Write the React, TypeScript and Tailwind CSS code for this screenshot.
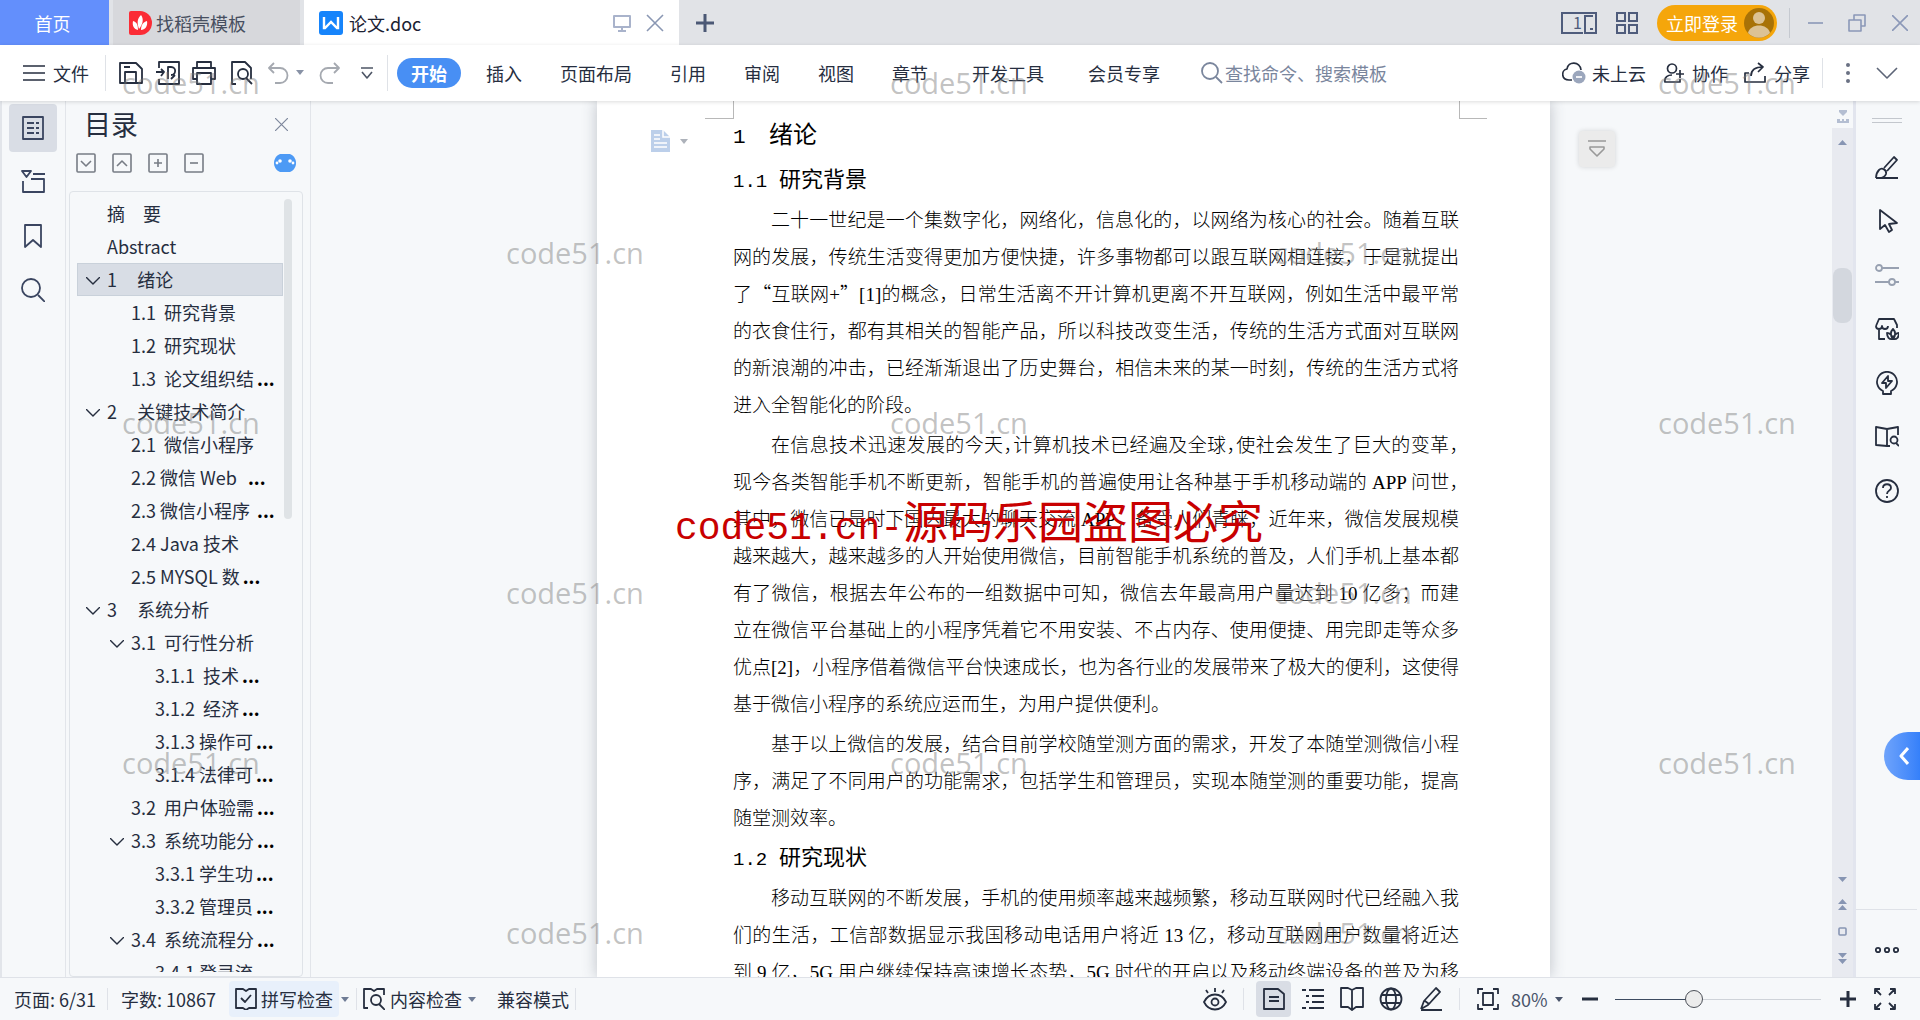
import React, { useState } from 'react';
import clsx from 'clsx';

interface IconProps {
  size?: number;
  width?: number;
  stroke?: number;
  className?: string;
  children: React.ReactNode;
}

function Icon({ size = 24, width, stroke = 2, className, children }: IconProps) {
  return (
    <svg
      width={width ?? size}
      height={size}
      viewBox={`0 0 ${width ?? size} ${size}`}
      fill="none"
      stroke="currentColor"
      strokeWidth={stroke}
      strokeLinejoin="round"
      className={clsx('shrink-0', className)}
      aria-hidden="true"
    >
      {children}
    </svg>
  );
}

function Caret({ className }: { className?: string }) {
  return (
    <Icon size={5} width={8} className={className}>
      <path d="M0 0h8L4 5z" fill="currentColor" stroke="none" />
    </Icon>
  );
}

interface TocItem {
  text: string;
  level: number;
  open?: boolean;
  cut?: boolean;
}

const toc: TocItem[] = [
  { text: '摘　要', level: 1 },
  { text: 'Abstract', level: 1 },
  { text: '1     绪论', level: 1, open: true },
  { text: '1.1  研究背景', level: 2 },
  { text: '1.2  研究现状', level: 2 },
  { text: '1.3  论文组织结', level: 2, cut: true },
  { text: '2     关键技术简介', level: 1, open: true },
  { text: '2.1  微信小程序', level: 2 },
  { text: '2.2 微信 Web  ', level: 2, cut: true },
  { text: '2.3 微信小程序 ', level: 2, cut: true },
  { text: '2.4 Java 技术', level: 2 },
  { text: '2.5 MYSQL 数', level: 2, cut: true },
  { text: '3     系统分析', level: 1, open: true },
  { text: '3.1  可行性分析', level: 2, open: true },
  { text: '3.1.1  技术', level: 3, cut: true },
  { text: '3.1.2  经济', level: 3, cut: true },
  { text: '3.1.3 操作可', level: 3, cut: true },
  { text: '3.1.4 法律可', level: 3, cut: true },
  { text: '3.2  用户体验需', level: 2, cut: true },
  { text: '3.3  系统功能分', level: 2, open: true, cut: true },
  { text: '3.3.1 学生功', level: 3, cut: true },
  { text: '3.3.2 管理员', level: 3, cut: true },
  { text: '3.4  系统流程分', level: 2, open: true, cut: true },
  { text: '3.4.1 登录流', level: 3 },
];

const indents: Record<number, string> = { 1: 'pl-2', 2: 'pl-8', 3: 'pl-14' };

const background: string[][] = [
  [
    '二十一世纪是一个集数字化，网络化，信息化的，以网络为核心的社会。随着互联',
    '网的发展，传统生活变得更加方便快捷，许多事物都可以跟互联网相连接，于是就提出',
    '了“互联网+”[1]的概念，日常生活离不开计算机更离不开互联网，例如生活中最平常',
    '的衣食住行，都有其相关的智能产品，所以科技改变生活，传统的生活方式面对互联网',
    '的新浪潮的冲击，已经渐渐退出了历史舞台，相信未来的某一时刻，传统的生活方式将',
    '进入全智能化的阶段。',
  ],
  [
    '在信息技术迅速发展的今天，计算机技术已经遍及全球，使社会发生了巨大的变革，',
    '现今各类智能手机不断更新，智能手机的普遍使用让各种基于手机移动端的 APP 问世，',
    '其中，微信已是时下国内最大的聊天交流 APP，备受人们青睐，近年来，微信发展规模',
    '越来越大，越来越多的人开始使用微信，目前智能手机系统的普及，人们手机上基本都',
    '有了微信，根据去年公布的一组数据中可知，微信去年最高用户量达到 10 亿多；而建',
    '立在微信平台基础上的小程序凭着它不用安装、不占内存、使用便捷、用完即走等众多',
    '优点[2]，小程序借着微信平台快速成长，也为各行业的发展带来了极大的便利，这使得',
    '基于微信小程序的系统应运而生，为用户提供便利。',
  ],
  [
    '基于以上微信的发展，结合目前学校随堂测方面的需求，开发了本随堂测微信小程',
    '序，满足了不同用户的功能需求，包括学生和管理员，实现本随堂测的重要功能，提高',
    '随堂测效率。',
  ],
];

const status: string[][] = [
  [
    '移动互联网的不断发展，手机的使用频率越来越频繁，移动互联网时代已经融入我',
    '们的生活，工信部数据显示我国移动电话用户将近 13 亿，移动互联网用户数量将近达',
    '到 9 亿，5G 用户继续保持高速增长态势，5G 时代的开启以及移动终端设备的普及为移',
  ],
];

// curly quotes come from the CJK face to stay full width, a closing comma is set half width
function renderLine(line: string) {
  return line.split(/([“”]|，$)/).map((part, i) => {
    if (/^[“”]$/.test(part)) {
      return <span key={i} className="font-['Noto_Sans_CJK_SC',sans-serif] leading-none">{part}</span>;
    }
    if (part === '，') {
      return <span key={i} className="[font-feature-settings:'halt']">{part}</span>;
    }
    return part;
  });
}

function Paragraph({ lines }: { lines: string[] }) {
  return (
    <p className="mb-[3px] last:mb-0">
      {lines.map((line, i) => (
        <span
          key={i}
          className={clsx(
            'block whitespace-nowrap',
            i === 0 && 'pl-[38px]',
            !line.endsWith('。') && '[text-align-last:justify]',
            i === 0 && line.endsWith('，') && "[font-feature-settings:'halt']"
          )}
        >
          {renderLine(line)}
        </span>
      ))}
    </p>
  );
}

function SectionHeading({ num, title }: { num: string; title: string }) {
  return (
    <h2 className="flex h-[43px] items-baseline text-[22px] leading-[37px]">
      <span className="w-[46px] font-['Liberation_Mono',monospace] text-[19px]">{num}</span>
      {title}
    </h2>
  );
}

function TitleBar() {
  return (
    <header className="flex h-[45px] shrink-0 bg-[#e1e3e7] text-lg">
      <button className="w-[109px] bg-[#638ffc] pr-1 pt-px text-white">首页</button>
      <button className="ml-1 flex w-[187px] items-center bg-[#d7d8dc] pl-4 text-[#474f60]">
        <svg width="23" height="24" viewBox="0 0 23 24" aria-hidden="true">
          <path d="M2 0h9a12 12 0 0 1 0 24H2a2 2 0 0 1-2-2V2a2 2 0 0 1 2-2z" fill="#fb2c36" />
          <path d="M12 4c3 4 2 9-2 14C8 12 8 8 12 4zM4 10c4 1 5 4 5 9-4-1-6-4-5-9zM18 10c1 5-2 9-6 9 0-5 2-8 6-9z" fill="#fff" />
        </svg>
        <span className="ml-1">找稻壳模板</span>
      </button>
      <div className="ml-1 flex w-[375px] items-center bg-white pl-[15px] pr-[15px] text-[#1b2233]">
        <svg width="24" height="24" viewBox="0 0 24 24" aria-hidden="true">
          <rect width="24" height="24" rx="3" fill="#1684fb" />
          <path d="M5 6v11h1l6-6 6 6h1V6" fill="none" stroke="#fff" strokeWidth="2.4" />
        </svg>
        <span className="ml-1.5">论文.doc</span>
        <button className="ml-auto text-[#a9b3cb]" aria-label="演示">
          <Icon size={18}><path d="M1 2h16v11H1zM9 13v4M5 17h8" /></Icon>
        </button>
        <button className="ml-[15px] text-[#8a97b3]" aria-label="关闭标签">
          <Icon size={18} stroke={1.6}><path d="M1 1l16 16M17 1L1 17" /></Icon>
        </button>
      </div>
      <button className="ml-[17px] text-[#4b5875]" aria-label="新建">
        <Icon size={18} stroke={3}><path d="M9 0v18M0 9h18" /></Icon>
      </button>

      <div className="ml-auto flex items-center pr-[12px] text-[#4f5c7c]">
        <button className="flex" aria-label="窗口">
          <svg width="36" height="22" viewBox="0 0 36 22" fill="none" stroke="currentColor" strokeWidth="2" aria-hidden="true">
            <path d="M22 21H1V1h34v20H24V4h8M29 17h3" />
            <text x="12" y="17" fontSize="16" stroke="none" fill="currentColor" fontFamily="Noto Sans CJK SC">1</text>
          </svg>
        </button>
        <button className="ml-[19px]" aria-label="应用">
          <Icon size={22}><path d="M1 1h8v8H1zM13 1h8v8h-8zM1 13h8v8H1zM13 13h8v8h-8z" strokeLinejoin="miter" /></Icon>
        </button>
        <button className="ml-[19px] flex h-9 items-center rounded-full bg-[#f5a60b] pl-[9px] pr-[3px] text-white">
          立即登录
          <svg className="ml-1.5" width="30" height="30" viewBox="0 0 30 30" aria-hidden="true">
            <circle cx="15" cy="15" r="15" fill="#a87207" />
            <circle cx="15" cy="10" r="6" fill="#dcc294" />
            <path d="M4 25c2-10 20-10 22 0a15 15 0 0 1-22 0z" fill="#dcc294" />
          </svg>
        </button>
        <span className="ml-3 h-[30px] w-px bg-[#c5c9d0]" />
        <div className="flex items-center text-[#8b98b8]">
          <button className="ml-[18px]" aria-label="最小化">
            <Icon size={16} stroke={1.6}><path d="M0 8h15" /></Icon>
          </button>
          <button className="ml-6" aria-label="还原">
            <Icon size={18} stroke={1.6}><path d="M1 6h12v11H1zM6 6V1h11v11h-4" /></Icon>
          </button>
          <button className="ml-[26px]" aria-label="关闭">
            <Icon size={16} stroke={1.6}><path d="M0 0l16 16M16 0L0 16" /></Icon>
          </button>
        </div>
      </div>
    </header>
  );
}

function Ribbon() {
  return (
    <nav className="relative z-10 flex h-14 shrink-0 items-center bg-white pb-px text-lg shadow-[0_1px_4px_rgba(0,0,0,0.14)]">
      <button className="ml-[23px] flex items-center gap-2">
        <Icon size={16} width={22} stroke={1.6}><path d="M0 1h22M0 8h22M0 15h22" /></Icon>
        文件
      </button>
      <span className="ml-4 h-9 w-px bg-[#dfe2e7]" />
      <div className="ml-[13px] flex items-center">
        <button aria-label="保存">
          <Icon size={24} stroke={1.8}><path d="M1 2h16l6 6v14H1zM6 22V11h11v11M5 6h6" /></Icon>
        </button>
        <button className="ml-[13px]" aria-label="输出为PDF">
          <Icon size={24} stroke={1.8}><path d="M3 7V1h20v22H3v-5M0 11h8M5 8l3 3-3 4M12 18V6h3c6 0 5 8 0 8M15 18l4-4" /></Icon>
        </button>
        <button className="ml-3" aria-label="打印">
          <Icon size={24} stroke={1.8}><path d="M5 7V1h14v6M5 18H1V7h22v11h-4M5 12h14v11H5z" /></Icon>
        </button>
        <button className="ml-[14px]" aria-label="打印预览">
          <Icon size={24} stroke={1.8}><path d="M6 23H2V1h13l6 6v8M21 15v3" /><circle cx="13" cy="13" r="5" /><path d="M16 17l6 6" /></Icon>
        </button>
        <button className="ml-[14px] text-[#a5a9b0]" aria-label="撤销">
          <Icon size={22} stroke={1.8}><path d="M6 1L1 6l5 5M1 6h11a7 7 0 0 1 0 15H7" /></Icon>
        </button>
        <button className="ml-1.5 text-[#8892a6]" aria-label="撤销列表"><Caret /></button>
        <button className="ml-[15px] text-[#a5a9b0]" aria-label="恢复">
          <Icon size={22} stroke={1.8}><path d="M15 1l5 5-5 5M20 6H9a7 7 0 0 0 0 15h5" /></Icon>
        </button>
        <button className="ml-5 text-[#4d5565]" aria-label="更多">
          <Icon size={12} stroke={1.6}><path d="M0 1h12M1 5l5 6 5-6" /></Icon>
        </button>
      </div>
      <span className="ml-[14px] h-9 w-px bg-[#dfe2e7]" />
      <button className="ml-[9px] h-[30px] rounded-full bg-[#488ff4] px-[14px] font-bold leading-[30px] text-white">开始</button>
      <div className="ml-[25px] flex gap-[38px] whitespace-nowrap">
        <button>插入</button>
        <button>页面布局</button>
        <button>引用</button>
        <button>审阅</button>
        <button>视图</button>
        <button>章节</button>
        <button className="mx-1.5">开发工具</button>
        <button>会员专享</button>
      </div>
      <label className="ml-[41px] flex items-center text-[#7a869d]">
        <Icon size={22} stroke={1.8}><circle cx="9" cy="9" r="8" /><path d="M15 15l6 6" /></Icon>
        <input
          className="ml-0.5 w-[170px] bg-transparent outline-none placeholder:text-[#7a869d] placeholder:opacity-100"
          placeholder="查找命令、搜索模板"
          aria-label="查找命令、搜索模板"
        />
      </label>

      <div className="ml-auto flex items-center whitespace-nowrap pr-[22px]">
        <button className="flex items-center gap-1.5">
          <Icon size={22} width={24} stroke={1.7}>
            <path d="M10 18H7C-1 18-1 8 5 7c1-8 13-8 14 1" />
            <circle cx="17" cy="15" r="6.5" fill="#9ba6bc" stroke="none" />
            <path d="M14 15h6" stroke="#fff" />
          </Icon>
          未上云
        </button>
        <button className="ml-[18px] flex items-center gap-2">
          <Icon size={20} stroke={1.7}><circle cx="8" cy="5.5" r="4.5" /><path d="M10 19H1c-1-5 3-7 7-7M16 7v8M12 11h8M10 19h6v-3" /></Icon>
          协作
        </button>
        <button className="ml-4 flex items-center gap-2">
          <Icon size={22} stroke={1.7}><path d="M5 11H1v9h20v-6M7 14c0-6 4-9 12-9M14 1l5 4-5 5" /></Icon>
          分享
        </button>
        <span className="ml-3 h-[30px] w-px bg-[#dfe2e7]" />
        <button className="ml-[23px] text-[#6a7183]" aria-label="更多选项">
          <Icon size={20} width={4}>
            <g fill="currentColor" stroke="none"><circle cx="2" cy="2" r="2" /><circle cx="2" cy="10" r="2" /><circle cx="2" cy="18" r="2" /></g>
          </Icon>
        </button>
        <button className="ml-[26px] text-[#5d6577]" aria-label="折叠功能区">
          <Icon size={12} width={22} stroke={1.6}><path d="M1 1l10 10L21 1" /></Icon>
        </button>
      </div>
    </nav>
  );
}

function SideTabs() {
  return (
    <aside className="flex w-[66px] shrink-0 flex-col gap-1.5 border-l-2 border-r border-[#e2e5ea] pl-[7px] pt-[3px] text-[#3a4560]">
      <button className="grid size-12 place-items-center rounded bg-[#d9dde5]" aria-label="目录">
        <Icon size={24} width={22} stroke={1.8}><path d="M1 1h20v22H1zM5 7h7M5 12h7M5 17h7M14 7h3M14 12h3M14 17h3" /></Icon>
      </button>
      <button className="grid size-12 place-items-center" aria-label="章节导航">
        <Icon size={24} stroke={1.8}><path d="M1 1h9L5.500 7zM12 4h12M10 9h13v13H2V11" /></Icon>
      </button>
      <button className="grid size-12 place-items-center" aria-label="书签">
        <Icon size={24} width={18} stroke={1.8}><path d="M1 1h16v22l-8-7-8 7z" /></Icon>
      </button>
      <button className="grid size-12 place-items-center" aria-label="查找">
        <Icon size={24} stroke={1.8}><circle cx="10" cy="10" r="9" /><path d="M17 17l7 7" /></Icon>
      </button>
    </aside>
  );
}

function TocPanel() {
  const [selected, setSelected] = useState(2);

  return (
    <section className="flex w-[245px] shrink-0 flex-col border-r border-[#e2e5ea] pl-[3px] pr-[7px]">
      <div className="flex h-[47px] items-center justify-between pl-[15px] pr-[15px]">
        <h2 className="pb-0.5 text-[27px] leading-[45px]">目录</h2>
        <button className="text-[#7d879c]" aria-label="关闭目录">
          <Icon size={13} stroke={1.2}><path d="M0 0l13 13M13 0L0 13" /></Icon>
        </button>
      </div>
      <div className="flex h-[30px] items-center gap-4 pl-[7px] pr-[7px] text-[#777c85]">
        <button aria-label="展开"><Icon size={20} stroke={1.6}><rect x="1" y="1" width="18" height="18" rx="1" /><path d="M5 8l5 5 5-5" /></Icon></button>
        <button aria-label="收起"><Icon size={20} stroke={1.6}><rect x="1" y="1" width="18" height="18" rx="1" /><path d="M5 13l5-5 5 5" /></Icon></button>
        <button aria-label="增加级别"><Icon size={20} stroke={1.6}><rect x="1" y="1" width="18" height="18" rx="1" /><path d="M6 10h8M10 6v8" /></Icon></button>
        <button aria-label="减少级别"><Icon size={20} stroke={1.6}><rect x="1" y="1" width="18" height="18" rx="1" /><path d="M6 10h8" /></Icon></button>
        <button className="ml-auto" aria-label="智能识别目录">
          <svg width="22" height="18" viewBox="0 0 22 18" aria-hidden="true">
            <path d="M6 0h10c8 3 8 15 0 18H6C-2 15-2 3 6 0z" fill="#4d9af5" />
            <g fill="#fff"><circle cx="6" cy="7" r="1.8" /><circle cx="3" cy="9" r="1.4" /><circle cx="16" cy="7" r="1.8" /><circle cx="19" cy="9" r="1.4" /></g>
          </svg>
        </button>
      </div>
      <div className="mt-[13px] flex min-h-0 flex-1 rounded border border-[#dfe3e8] pb-1 pl-[7px] pt-[5px]">
        <ul className="h-full w-[206px] overflow-hidden text-lg">
          {toc.map((item, i) => (
            <li key={item.text}>
              <button
                onClick={() => setSelected(i)}
                className={clsx(
                  'flex h-[33px] w-full items-center whitespace-pre border pb-0.5 text-left',
                  indents[item.level],
                  selected === i ? 'border-[#c9d1da] bg-[#d8dde5]' : 'border-transparent'
                )}
              >
                <span className="w-[21px] shrink-0 pt-1">
                  {item.open && <Icon size={8} width={14} stroke={1.4}><path d="M0 0l7 7 7-7" /></Icon>}
                </span>
                {item.text}
                {item.cut && <span className="ml-[3px] font-bold text-black">...</span>}
              </button>
            </li>
          ))}
        </ul>
        <div className="ml-px mt-0.5 h-80 w-2 rounded-full bg-[#dfe3e6]" />
      </div>
    </section>
  );
}

function DocumentPage() {
  return (
    <article
      lang="zh-CN"
      className="relative h-full w-[953px] shrink-0 bg-white pl-[136px] pr-[91px] pt-1.5 text-black shadow-[0_0_14px_rgba(60,70,85,0.3)]"
    >
      <span className="absolute left-[108px] top-0 h-[18px] w-[29px] border-b border-r border-[#b8b8b8]" />
      <span className="absolute right-[63px] top-0 h-[18px] w-[28px] border-b border-l border-[#b8b8b8]" />
      <button className="absolute left-[54px] top-[29px] flex items-center gap-2.5 text-[#adb2ba]" aria-label="页面选项">
        <svg width="19" height="22" viewBox="0 0 19 22" aria-hidden="true">
          <path d="M0 0h12l7 7v15H0z" fill="#bccfea" />
          <path d="M12 0v7h7M3 5h6M3 9h6M3 13h13M3 17h13" stroke="#fff" strokeWidth="1.5" fill="none" />
        </svg>
        <Caret />
      </button>

      <h1 className="flex h-[52px] items-baseline text-2xl leading-[51px]">
        <span className="w-9 font-['Liberation_Mono',monospace] text-[21px]">1</span>
        绪论
      </h1>
      <SectionHeading num="1.1" title="研究背景" />
      <div className="font-['Liberation_Serif','Noto_Sans_CJK_SC',serif] text-[19px] font-light leading-[37px]">
        {background.map((lines) => <Paragraph key={lines[0]} lines={lines} />)}
      </div>
      <SectionHeading num="1.2" title="研究现状" />
      <div className="font-['Liberation_Serif','Noto_Sans_CJK_SC',serif] text-[19px] font-light leading-[37px]">
        {status.map((lines) => <Paragraph key={lines[0]} lines={lines} />)}
      </div>
    </article>
  );
}

function ScrollBar() {
  return (
    <div className="flex w-[21px] shrink-0 flex-col items-center text-[#8795b3]">
      <div className="grid h-[27px] place-items-center pt-1 text-[#b4bed2]">
        <Icon size={14}><path d="M3 0h8v2L7 6 3 2zM1 9h3v2h2V9h2v2h2V9h3v4H1z" fill="currentColor" stroke="none" /></Icon>
      </div>
      <div className="flex w-full flex-1 flex-col items-center bg-[#e8eaf0] pb-[13px] pt-3">
        <button className="h-[5px]" aria-label="向上滚动"><Icon size={5} width={9}><path d="M0 5h9L4.500 0z" fill="currentColor" stroke="none" /></Icon></button>
        <div className="mt-[123px] h-[55px] w-[19px] rounded-lg bg-[#d3d7de]" />
        <div className="mt-auto flex flex-col items-center gap-[17px]">
          <button aria-label="向下滚动"><Icon size={5} width={9}><path d="M0 0h9L4.500 5z" fill="currentColor" stroke="none" /></Icon></button>
          <button aria-label="上一页"><Icon size={11} width={9}><path d="M0 5h9L4.500 0zM0 11h9L4.500 6z" fill="currentColor" stroke="none" /></Icon></button>
          <button aria-label="选择浏览对象"><Icon size={9} stroke={1.6}><rect x="1" y="1" width="7" height="7" rx="1" /></Icon></button>
          <button aria-label="下一页"><Icon size={11} width={9}><path d="M0 0h9L4.500 5zM0 6h9L4.500 11z" fill="currentColor" stroke="none" /></Icon></button>
        </div>
      </div>
    </div>
  );
}

function ToolRail() {
  const cell = 'grid h-[54px] place-items-center';

  return (
    <aside className="relative flex w-[67px] shrink-0 flex-col border-l-[3px] border-[#e2e5ee] pr-[3px]">
      <div className="mx-auto mt-[17px] h-[5px] w-[30px] border-y border-[#c3c7cd]" />
      <div className="mt-[17px] flex flex-col">
        <button className={cell} aria-label="样式">
          <Icon size={24} stroke={1.8}><path d="M9 13L19 2l3 3L12 16M1 23h22M1 23c0-4 1-6 3-8 3-3 8 0 7 4-1 3-4 4-7 4" /></Icon>
        </button>
        <button className={cell} aria-label="选择">
          <Icon size={24} stroke={1.8}><path d="M5 1v19l5-4 4 7 3-2-3-6 8-1z" /></Icon>
        </button>
        <button className={clsx(cell, 'text-[#98a1b1]')} aria-label="属性">
          <Icon size={24} stroke={1.8}><circle cx="4" cy="5" r="3" /><path d="M7 5h17M0 19h14M20 19h4" /><circle cx="17" cy="19" r="3" /></Icon>
        </button>
        <button className={cell} aria-label="资源">
          <Icon size={24} stroke={1.8}>
            <path d="M4 12v10h6M1 9l3-7h15l3 6v3M1 9c0 4 6 4 6 0 0 4 6 4 6 0M18 12c3 3 3 6 0 10-3-4-3-7 0-10zM12 16c3 0 5 2 6 6-4 1-6-2-6-6zM24 16c-3 0-5 2-6 6 4 1 6-2 6-6z" />
          </Icon>
        </button>
        <button className={cell} aria-label="快捷工具">
          <Icon size={24} stroke={1.8}><path d="M8 20a10 10 0 1 1 8 0v3H8zM13 5l-6 7h4v5l6-7h-4z" /></Icon>
        </button>
        <button className={cell} aria-label="查词">
          <Icon size={24} stroke={1.8}><path d="M12 4v17l-11-1V2zM12 4l11-2v8M12 21h3" /><circle cx="19" cy="15" r="3.5" /><path d="M21 18l3 3" /></Icon>
        </button>
        <button className={cell} aria-label="帮助">
          <Icon size={24} stroke={1.8}><circle cx="12" cy="12" r="11" /><path d="M8 9c0-5 8-5 8 0 0 3-4 2-4 6M12 17v2" /></Icon>
        </button>
      </div>
      <div className="mt-auto h-px w-full bg-[#dfe2e8]" />
      <button className="grid h-[67px] place-items-center pt-3" aria-label="更多工具">
        <Icon size={8} width={24} stroke={1.8}><circle cx="3" cy="4" r="2.2" /><circle cx="12" cy="4" r="2.2" /><circle cx="21" cy="4" r="2.2" /></Icon>
      </button>
      <button
        className="absolute right-0 top-[631px] grid h-12 w-9 place-items-center rounded-l-full bg-linear-to-r from-[#6ea3fb] to-[#3580fa] pl-1 text-white"
        aria-label="展开侧栏"
      >
        <Icon size={18} width={10} stroke={3}><path d="M9 1L2 9l7 8" /></Icon>
      </button>
    </aside>
  );
}

function StatusBar() {
  const [zoom, setZoom] = useState(37);

  return (
    <footer className="flex h-[43px] shrink-0 items-center whitespace-nowrap border-t border-[#dfe2e8] text-lg">
      <span className="ml-[14px] w-[93px]">页面: 6/31</span>
      <span className="h-[22px] w-px bg-[#dfe2e8]" />
      <span className="w-[121px] pl-[13px]">字数: 10867</span>
      <button className="flex h-9 w-[110px] items-center rounded bg-[#e8f0fb] pl-1.5">
        <Icon size={22} stroke={1.8}><path d="M1 1h7l3 2 3-2h7v19h-7l-3 2-3-2H1zM6 10l4 4 6-7" /></Icon>
        <span className="ml-1">拼写检查</span>
      </button>
      <button className="ml-0.5 text-[#6f7c95]" aria-label="拼写检查选项"><Caret /></button>
      <span className="ml-[7px] h-[22px] w-px bg-[#dfe2e8]" />
      <button className="ml-1.5 flex items-center">
        <Icon size={22} stroke={1.8}><path d="M5 20H1V1h7l3 2 3-2h7v6" /><circle cx="13" cy="12" r="5" /><path d="M16 16l6 6" /></Icon>
        <span className="ml-[5px]">内容检查</span>
      </button>
      <button className="ml-1.5 text-[#6f7c95]" aria-label="内容检查选项"><Caret /></button>
      <span className="ml-[21px]">兼容模式</span>
      <span className="ml-1.5 h-[22px] w-px bg-[#dfe2e8]" />

      <div className="ml-auto flex items-center pr-6">
        <button aria-label="护眼模式">
          <Icon size={24} stroke={1.8}><path d="M1 15c5-10 17-10 22 0-5 10-17 10-22 0z" /><circle cx="12" cy="15" r="3.5" /><path d="M12 1v4M3 3l2 3M21 3l-2 3" /></Icon>
        </button>
        <span className="ml-4 h-[22px] w-px bg-[#dfe2e8]" />
        <button className="ml-3 grid h-9 w-[35px] place-items-center rounded bg-[#d9dde5]" aria-label="页面视图">
          <Icon size={22} stroke={1.8}><path d="M1 1h14l6 5v15H1zM6 9h10M6 13h10" /></Icon>
        </button>
        <button className="ml-[11px]" aria-label="大纲">
          <Icon size={22} stroke={1.8}><path d="M0 2h4M7 2h15M4 8h3M10 8h12M4 14h3M10 14h12M0 20h4M7 20h15" /></Icon>
        </button>
        <button className="ml-4" aria-label="阅读版式">
          <Icon size={24} stroke={1.8}><path d="M12 3v19M12 3l-4-2H1v19h7l4 3 4-3h7V1h-7z" /></Icon>
        </button>
        <button className="ml-[15px]" aria-label="Web版式">
          <Icon size={24} stroke={1.8}><circle cx="12" cy="12" r="10.5" /><ellipse cx="12" cy="12" rx="5" ry="10.5" /><path d="M2 8h20M2 16h20" /></Icon>
        </button>
        <button className="ml-4" aria-label="写作模式">
          <Icon size={24} stroke={1.8}><path d="M2 23h21M2 22l3-8L17 1l4 4L9 18l-7 4M6 14l4 3 8-9" /></Icon>
        </button>
        <span className="ml-4 h-[22px] w-px bg-[#dfe2e8]" />
        <button className="ml-[17px]" aria-label="最佳显示比例">
          <Icon size={22} stroke={1.8}><path d="M1 6V1h5M16 1h5v5M21 16v5h-5M6 21H1v-5M6 5h10v12H6z" /></Icon>
        </button>
        <button className="ml-3 flex w-[52px] items-center justify-between text-[#4a556b]">80% <Caret /></button>
        <button className="ml-[19px]" aria-label="缩小"><Icon size={16} stroke={3}><path d="M0 8h16" /></Icon></button>
        <input
          type="range"
          min={0}
          max={100}
          value={zoom}
          onChange={(e) => setZoom(Number(e.target.value))}
          aria-label="显示比例"
          style={{ backgroundImage: `linear-gradient(to right, #3d4b60 ${zoom}%, #cfd3d9 ${zoom}%)` }}
          className="ml-[17px] h-px w-[206px] appearance-none [&::-webkit-slider-thumb]:size-[18px] [&::-webkit-slider-thumb]:appearance-none [&::-webkit-slider-thumb]:rounded-full [&::-webkit-slider-thumb]:border [&::-webkit-slider-thumb]:border-[#4c5058] [&::-webkit-slider-thumb]:bg-[#ececec]"
        />
        <button className="ml-[19px]" aria-label="放大"><Icon size={16} stroke={3}><path d="M0 8h16M8 0v16" /></Icon></button>
        <button className="ml-[18px]" aria-label="全屏">
          <Icon size={22} stroke={1.8}><path d="M1 6V1h5M1 1l6 6M16 1h5v5M21 1l-6 6M21 16v5h-5M21 21l-6-6M6 21H1v-5M1 21l6-6" /></Icon>
        </button>
      </div>
    </footer>
  );
}

const marks = [
  'left-[122px] top-[63px]',
  'left-[890px] top-[63px]',
  'left-[1658px] top-[63px]',
  'left-[506px] top-[233px]',
  'left-[1274px] top-[233px]',
  'left-[122px] top-[403px]',
  'left-[890px] top-[403px]',
  'left-[1658px] top-[403px]',
  'left-[506px] top-[573px]',
  'left-[1274px] top-[573px]',
  'left-[122px] top-[743px]',
  'left-[890px] top-[743px]',
  'left-[1658px] top-[743px]',
  'left-[506px] top-[913px]',
  'left-[1274px] top-[913px]',
];

function Watermarks() {
  return (
    <div className="pointer-events-none absolute inset-0 z-20 overflow-hidden">
      {marks.map((place) => (
        <span
          key={place}
          className={clsx("absolute font-['Open_Sans',sans-serif] text-[29px] leading-[40px] text-[#787878]/45", place)}
        >
          code51.cn
        </span>
      ))}
      <span className="absolute left-[675px] top-[490px] flex items-baseline whitespace-nowrap leading-[60px] text-[#c80000]">
        <span className="font-['Liberation_Mono',monospace] text-[38px]">code51.cn-</span>
        <span className="text-[45px]">源码乐园盗图必究</span>
      </span>
    </div>
  );
}

export default function App() {
  return (
    <div className="relative flex h-screen flex-col overflow-hidden bg-[#f6f8fa] font-['Noto_Sans_CJK_SC',sans-serif] text-[#262e3f]">
      <TitleBar />
      <Ribbon />
      <div className="flex min-h-0 flex-1">
        <SideTabs />
        <TocPanel />
        <main className="relative flex min-w-0 flex-1 justify-center overflow-hidden pl-1">
          <div className="relative h-full">
            <DocumentPage />
            <button
              className="absolute -right-[65px] top-[30px] grid size-9 place-items-center rounded bg-[#ebebeb] text-[#999] shadow-[0_0_5px_rgba(0,0,0,0.15)]"
              aria-label="展开工具"
            >
              <Icon size={18} stroke={1.6}><path d="M0 1h18M2 7h14v2l-7 7-7-7z" /></Icon>
            </button>
          </div>
        </main>
        <ScrollBar />
        <ToolRail />
      </div>
      <StatusBar />
      <Watermarks />
    </div>
  );
}
